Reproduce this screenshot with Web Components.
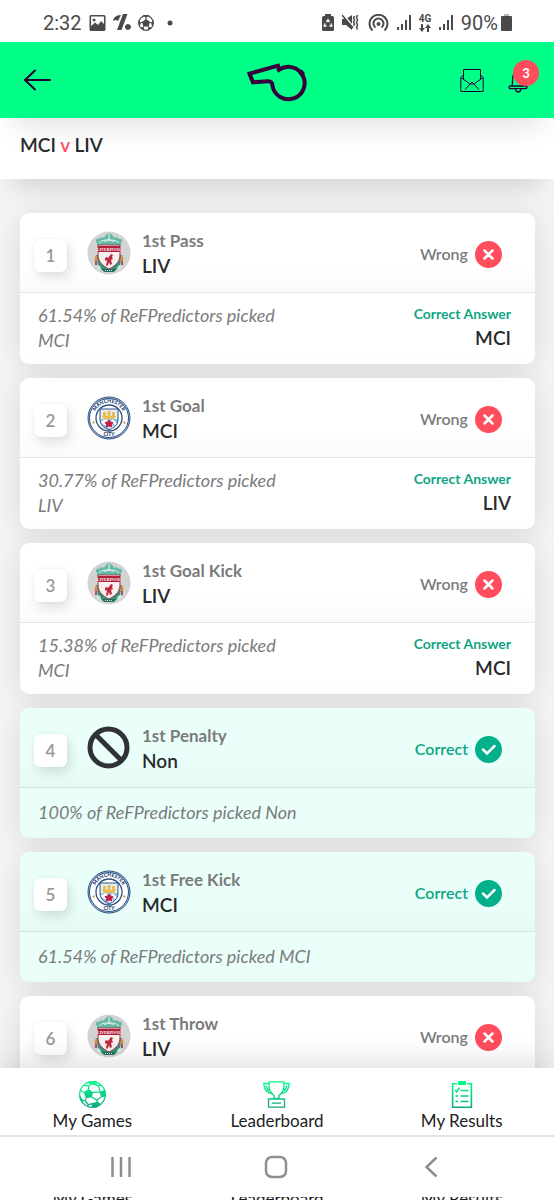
<!DOCTYPE html>
<html lang="en">
<head>
<meta charset="utf-8">
<meta name="viewport" content="width=device-width, initial-scale=1">
<title>MCI v LIV</title>
<style>
  html, body { height: 100%; }
  body {
    margin: 0;
    font-family: Lato, "Open Sans", sans-serif;
    color: #2a2b2c;
    background: #f4f4f4;
  }
</style>
</head>
<body>
<app-screen>
  <status-bar slot="top" time="2:32" battery="90%"></status-bar>
  <app-header slot="top" count="3"></app-header>
  <match-bar slot="top" home="MCI" away="LIV"></match-bar>

  <prediction-card number="1" event="1st Pass" pick="LIV" result="wrong" answer="MCI">61.54% of ReFPredictors picked MCI</prediction-card>
  <prediction-card number="2" event="1st Goal" pick="MCI" result="wrong" answer="LIV">30.77% of ReFPredictors picked LIV</prediction-card>
  <prediction-card number="3" event="1st Goal Kick" pick="LIV" result="wrong" answer="MCI">15.38% of ReFPredictors picked MCI</prediction-card>
  <prediction-card number="4" event="1st Penalty" pick="Non" result="correct">100% of ReFPredictors picked Non</prediction-card>
  <prediction-card number="5" event="1st Free Kick" pick="MCI" result="correct">61.54% of ReFPredictors picked MCI</prediction-card>
  <prediction-card number="6" event="1st Throw" pick="LIV" result="wrong"></prediction-card>

  <tab-bar slot="bottom">
    <tab-item icon="ball" href="#games">My Games</tab-item>
    <tab-item icon="trophy" href="#leaderboard">Leaderboard</tab-item>
    <tab-item icon="list" href="#results">My Results</tab-item>
  </tab-bar>
  <system-nav slot="bottom">
    <span>My Games</span><span>Leaderboard</span><span>My Results</span>
  </system-nav>
</app-screen>

<script>
const gradient = `
  <linearGradient id="g" gradientUnits="userSpaceOnUse" x1="0" y1="0" x2="0" y2="27">
    <stop offset="0" stop-color="#00ff87"/><stop offset="1" stop-color="#0fa583"/>
  </linearGradient>`;

const tabIcons = {
  ball: `<svg width="27" height="27" viewBox="0 0 27 27" fill="none" stroke="url(#g)" stroke-width="1.2">
    <defs>${gradient}</defs>
    <circle cx="13.5" cy="13.5" r="12.8"/>
    <path fill="url(#g)" d="M5.5 11.5 9.5 8.8 13.3 11.3 12.5 15.8 7.3 16.5zM21.3 11.2 25.8 9.3 26.2 15 22.7 15.6zM13.3 22.6 18.5 21.3 20.7 22.8 17.5 26 13.4 26zM9.5 1.6 13.5 2.8 17.8 1.8 17 .9 10.5.9zM.9 15.2 2.8 18.7 3.6 22.3 1.5 18z"/>
    <path d="M9.5 8.8 9.8 4.8 13.5 2.8 19.2 4.6 21.3 11.2 13.3 11.3M19.2 4.6 22.6 4.5M9.8 4.8 5 4.5M5.5 11.5 1.4 9.5M7.3 16.5 6.2 20 2.8 18.7M6.2 20 9.2 23.7 13.3 22.6M9.2 23.7 8.9 25.4M12.5 15.8 17.7 19.2 18.5 21.3M17.7 19.2 22.7 15.6"/>
  </svg>`,
  trophy: `<svg width="27" height="27" viewBox="0 0 27 27" fill="none" stroke="url(#g)" stroke-width="1.3">
    <defs>${gradient}</defs>
    <path d="M6 .8h15v4.5c0 4.7-2.5 7.2-5 9.2v2.8h-5v-2.8c-2.5-2-5-4.5-5-9.2z"/>
    <path d="M6 2.5H.8c0 5.5 3 9 7.5 10M21 2.5h5.2c0 5.5-3 9-7.5 10M3 4.5c.5 2.5 1.5 4.5 3.8 5.5M24 4.5c-.5 2.5-1.5 4.5-3.8 5.5"/>
    <path d="M5.5 18h16v8.2h-16zM9 22.1h9"/>
  </svg>`,
  list: `<svg width="22" height="27" viewBox="0 0 22 27" fill="none" stroke="url(#g)" stroke-width="1.6">
    <defs>${gradient}</defs>
    <path d="M6 2.8H1.6v23.4h18.8V2.8H16"/>
    <path fill="url(#g)" stroke="none" d="M7 1.2C7 .5 7.5 0 8.2 0h5.6c.7 0 1.2.5 1.2 1.2V4H7z"/>
    <path d="M9.5 9.5h8M9.5 15h8M9.5 20.5h8M4.2 9l1.5 1.8 2.8-4M4.5 15h2.6M4.5 20.5h2.6"/>
  </svg>`
};

const crests = {
  LIV: `<svg viewBox="0 0 44 44" width="44" height="44" aria-hidden="true">
    <circle cx="22" cy="22" r="21.5" fill="#d3d3d3"/>
    <path d="M10 12c-2-2-1-5 2-4 1-2 4-2 5-1 1-3 3-4 5-5 2 1 4 2 5 5 1-1 4-1 5 1 3-1 4 2 2 4v3H10z" fill="#63b9a8"/>
    <path d="M12 12c3-3 6-3 10-3s7 0 10 3M16 9c1 2 3 2 6-1 3 3 5 3 6 1M22 3v7" fill="none" stroke="#e8f4ef" stroke-width="1"/>
    <path d="M9 24c1.5 4 1.5 8 2 11l5 5h12l5-5c.5-3 .5-7 2-11z" fill="#2f9380"/>
    <path d="M9 36l3-2 2 3-2 2zM35 36l-3-2-2 3 2 2z" fill="#d7e9e3"/>
    <path d="M11 14h22v9c0 7-3 11-11 15-8-4-11-8-11-15z" fill="#f6efee" stroke="#a93a46" stroke-width="1"/>
    <path d="M11 15h22v6H11z" fill="#b32039"/>
    <text x="22" y="20" text-anchor="middle" font-family="Liberation Serif, serif" font-size="4" font-weight="700" fill="#fff">LIVERPOOL</text>
    <path d="M24 23l2 1-1 2 1 2-2 1 1 4-2 1-1-3-1 3-1 1-1-1 1-4-1-1-1 1v-3l2-1 1 1z" fill="#c0283f"/>
    <path d="M8 30c-1-2 0-4 1-6 1 2 2 4 1 6zM36 30c1-2 0-4-1-6-1 2-2 4-1 6z" fill="#e38b34"/>
    <path d="M9 30v4M35 30v4" stroke="#b32039" stroke-width="1.5"/>
    <path d="M15 38h14l-2 3H17z" fill="#23705f"/><path d="M18 39.5h8" stroke="#cfe5de" stroke-width="1" stroke-dasharray="1 1"/>
  </svg>`,
  MCI: `<svg viewBox="0 0 44 44" width="44" height="44" aria-hidden="true">
    <defs><path id="arc" d="M7.2 24a15 15 0 1 1 29.6 0"/><clipPath id="shield"><path d="M13 13h18v10c0 6-4 9-9 11-5-2-9-5-9-11z"/></clipPath></defs>
    <circle cx="22" cy="22" r="21" fill="#b5c9dc" stroke="#2c5284"/>
    <circle cx="22" cy="22" r="19.5" fill="#fff" stroke="#2c5284" stroke-width="1"/>
    <circle cx="22" cy="22" r="13" fill="#fff" stroke="#2c5284" stroke-width="1.3"/>
    <g font-family="Lato, sans-serif" font-size="5" font-weight="900" fill="#1c3f74" text-anchor="middle">
      <text><textPath href="#arc" startOffset="50%">MANCHESTER</textPath></text>
      <text x="22" y="39.5">CITY</text>
    </g>
    <path d="M5.5 26l1.5-1 1 2-2 1zM38.5 26l-1.5-1-1 2 2 1z" fill="#c9a54a"/>
    <g clip-path="url(#shield)">
      <path d="M13 13h18v21H13z" fill="#8fc3e8"/>
      <path d="M13 13h18v10H13z" fill="#e4eef6"/>
      <path d="M13 26l6-3 10 10h-5zM25 23l7 6v3l-8-6z" fill="#fff"/>
      <path d="M15 20h14l-2 3H17zM16 16h3v4h-3zM20.5 15h3v5h-3zM25 16h3v4h-3z" fill="#ecbd4d"/>
    </g>
    <path d="M13 13h18v10c0 6-4 9-9 11-5-2-9-5-9-11z" fill="none" stroke="#2c5284"/>
    <path d="M22 24l1.5 2 2.5.5-1.5 2 .3 2.5-2.800-1-2.800 1 .3-2.500-1.500-2 2.500-.5z" fill="#c4204d" stroke="#c4204d"/>
  </svg>`,
  Non: `<svg viewBox="0 0 44 44" width="44" height="44" fill="none" stroke="#313235" stroke-width="5" aria-hidden="true">
    <circle cx="21.5" cy="21.5" r="18.5"/><path d="M8.5 8.5l26 26"/>
  </svg>`
};

class AppScreen extends HTMLElement {
  constructor() {
    super();
    this.attachShadow({ mode: "open" }).innerHTML = `
      <style>
        :host { display: flex; flex-direction: column; height: 100vh; }
        header { position: relative; z-index: 2; }
        main {
          flex: 1;
          min-height: 0;
          overflow-y: auto;
          scrollbar-width: none;
          display: flex;
          flex-direction: column;
          gap: 14px;
          padding: 34px 19px 20px 20px;
        }
        footer { position: relative; z-index: 2; }
      </style>
      <header><slot name="top"></slot></header>
      <main><slot></slot></main>
      <footer><slot name="bottom"></slot></footer>
    `;
  }
}

class StatusBar extends HTMLElement {
  connectedCallback() {
    const signal = `<svg width="14" height="16" viewBox="0 0 14 16"><path d="M0 12h2v3H0zM4 9h2v6H4zM8 5h2v10H8zM12 0h2v15h-2z"/></svg>`;
    this.attachShadow({ mode: "open" }).innerHTML = `
      <style>
        :host {
          display: flex;
          justify-content: space-between;
          align-items: center;
          height: 42px;
          padding: 3px 42px 0 43px;
          box-sizing: border-box;
          background: #fff;
          color: #4a4a4a;
          font: 20px/24px Roboto, sans-serif;
        }
        div { display: flex; align-items: center; gap: 8px; }
        .left { gap: 7px; }
        .battery { gap: 3px; }
        svg { display: block; fill: currentColor; }
        .net { font: 700 10px/10px Roboto, sans-serif; text-align: center; width: 12px; }
        .net svg { margin: 0 auto; }
      </style>
      <div class="left">
        <span>${this.getAttribute("time")}</span>
        <svg width="17" height="16" viewBox="0 0 16 16"><path fill-rule="evenodd" d="M1.5 0h13Q16 0 16 1.5v13q0 1.5-1.5 1.5h-13Q0 16 0 14.5v-13Q0 0 1.5 0zM1.6 1.6V11l4-3.5 3 2.5 3-4 2.800 3V1.6zM4.5 3.5a1.5 1.5 0 1 0 .1 0z"/></svg>
        <svg width="18" height="17" viewBox="0 0 18 17"><path d="M0 6Q2 1 8 1L5 7Q2 5 1 7zM10 0h4.500L8.500 16H4zM15 10a3 3 0 1 1-.1 0z"/></svg>
        <svg width="16" height="16" viewBox="0 0 16 16"><circle cx="8" cy="8" r="7.3" fill="none" stroke="currentColor" stroke-width="1.2"/><path d="M8 4l4 3-1.5 4.5h-5L4 7zM4.5 0h7L8 2.8zM0 5l3 3-1.5 4zM16 5l-3 3 1.5 4zM2 12.5l3.5-.5 1 4zM14 12.5l-3.5-.5-1 4z"/><path d="M8 2v3M2 8l3-1M14 8l-3-1M5 13l1-2M11 13l-1-2" stroke="currentColor"/></svg>
        <svg width="17" height="6" viewBox="0 0 17 6"><circle cx="9" cy="3" r="2.5"/></svg>
      </div>
      <div>
        <svg width="12" height="17" viewBox="0 0 12 17"><path d="M3 2V0h6v2h1.5Q12 2 12 3.5v12q0 1.5-1.5 1.5h-9Q0 17 0 15.5v-12Q0 2 1.5 2z"/><path d="M4.5 8L6 5.8 7.5 8M9 9.5l.8 2.5H7.5M4.5 12H2.2L3 9.5" fill="none" stroke="#fff" stroke-width="1.4"/></svg>
        <svg width="18" height="17" viewBox="0 0 18 17"><path d="M0 5h4l6-4v15l-6-5H0z"/><path d="M1 0l11 14" stroke="#fff" stroke-width="2"/><path d="M0 1l11 13M12.5 2l-1 2 1 2-1 2 1 2-1 2M15.5 1l-1 2.5 1 2.5-1 2.5 1 2.5-1 2.5 1 2" fill="none" stroke="currentColor" stroke-width="1.5"/></svg>
        <svg width="21" height="18" viewBox="0 0 21 18"><g fill="none" stroke="currentColor" stroke-width="2"><path d="M4.5 16.5a9 9 0 1 1 12 0"/><path d="M7.5 13.5a5 5 0 1 1 6 0"/></g><circle cx="10.5" cy="10" r="2"/></svg>
        ${signal}
        <span class="net">4G<svg width="12" height="8" viewBox="0 0 12 8"><path d="M2 0h2v4h2L3 8 0 4h2zM8 8h2V4h2L9 0 6 4h2z"/></svg></span>
        ${signal}
        <div class="battery">
          <span>${this.getAttribute("battery")}</span>
          <svg width="11" height="17" viewBox="0 0 11 17"><path d="M3 0h5v2H3z" opacity=".4"/><path d="M1 2h9q1 0 1 1v13q0 1-1 1H1q-1 0-1-1V3q0-1 1-1z"/></svg>
        </div>
      </div>
    `;
  }
}

class AppHeader extends HTMLElement {
  connectedCallback() {
    this.attachShadow({ mode: "open" }).innerHTML = `
      <style>
        :host {
          display: grid;
          grid-template-columns: 1fr auto 1fr;
          align-items: center;
          height: 76px;
          padding: 0 24px;
          box-sizing: border-box;
          background: #00ff87;
          position: relative;
          z-index: 1;
          box-shadow: 0 22px 30px -14px rgba(0, 0, 0, .12);
        }
        button {
          display: block;
          padding: 0;
          border: 0;
          background: none;
          color: #250034;
          cursor: pointer;
          position: relative;
        }
        svg { display: block; fill: none; stroke: currentColor; }
        .back { justify-self: start; }
        .actions { justify-self: end; display: flex; gap: 24px; }
        .logo { color: #37003c; }
        .badge {
          position: absolute;
          left: 5px;
          top: -7px;
          width: 26px;
          border-radius: 50%;
          background: #ff4d5e;
          color: #fff;
          font: 700 13px/26px Lato, sans-serif;
          text-align: center;
        }
      </style>
      <button class="back" aria-label="Back">
        <svg width="28" height="24" viewBox="1 0 28 24" stroke-width="2" stroke-linecap="round" stroke-linejoin="round"><path d="M27 12H2M12 2.5L2 12l10 9.5"/></svg>
      </button>
      <svg class="logo" width="62" height="46" viewBox="-1 -6 62 46" stroke-width="4" role="img" aria-label="ReFPredictor">
        <path d="M2.5 10.7L31 2.6l1.2 4.1A16.2 16.2 0 1 1 25.5 23Q25.5 18 20.5 18.3L6 19.3z"/>
        <path d="M31 5l2 2M53 8l3 4" stroke-width="5"/>
      </svg>
      <div class="actions">
        <button aria-label="Messages">
          <svg width="24" height="26" viewBox="0 0 24 26" stroke-width="1"><path d="M3.5 12V2.5h17V12M3.5 8L.8 10.5v14h22.4v-14L20.5 8M.8 10.5l8.7 6M23.2 10.5l-8.7 6M5 22.5l7-7.5 7 7.5M9.5 16.5q2.5 1.5 5 0"/></svg>
        </button>
        <button aria-label="Notifications">
          <svg width="22" height="26" viewBox="0 0 22 26" stroke-width="1.3"><path d="M4 19C5 16 4 10 5.5 7.5 8 4 13 4 15.5 7.5 17 10 16 16 17 19M2.5 19h15q1.5 0 1.5 1.3t-1.5 1.4h-15Q1 21.7 1 20.3T2.5 19zM7.5 22q.3 3 2.7 3t2.8-3"/></svg>
          <span class="badge">${this.getAttribute("count")}</span>
        </button>
      </div>
    `;
  }
}

class MatchBar extends HTMLElement {
  connectedCallback() {
    this.attachShadow({ mode: "open" }).innerHTML = `
      <style>
        :host {
          display: block;
          padding: 15px 20px 22px;
          background: #fff;
          box-shadow: 0 20px 28px -14px rgba(0, 0, 0, .16);
        }
        h1 { margin: 0; font-size: 19px; line-height: 24px; font-weight: 600; }
        span { color: #ff4d5e; }
      </style>
      <h1>${this.getAttribute("home")} <span>v</span> ${this.getAttribute("away")}</h1>
    `;
  }
}

class ResultMark extends HTMLElement {
  connectedCallback() {
    const ok = this.getAttribute("result") === "correct";
    this.attachShadow({ mode: "open" }).innerHTML = `
      <style>
        :host {
          display: flex;
          align-items: center;
          gap: 7px;
          font-size: 16px;
          line-height: 24px;
          font-weight: 600;
          color: ${ok ? "#0fa583" : "#7b7b7b"};
        }
        svg { display: block; fill: none; stroke: #fff; stroke-linecap: round; }
      </style>
      <span>${ok ? "Correct" : "Wrong"}</span>
      <svg width="27" height="27" viewBox="0 0 27 27" stroke-width="2.5" aria-hidden="true">
        <circle cx="13.5" cy="13.5" r="13.5" stroke="none" fill="${ok ? "#04b08b" : "#ff4d5e"}"/>
        <path d="${ok ? "M8 13.5l4 4 7.5-7.5" : "M9.5 9.5l8 8M17.5 9.5l-8 8"}"/>
      </svg>
    `;
  }
}

class PredictionCard extends HTMLElement {
  connectedCallback() {
    const pick = this.getAttribute("pick");
    const result = this.getAttribute("result");
    const answer = this.getAttribute("answer");
    this.attachShadow({ mode: "open" }).innerHTML = `
      <style>
        :host {
          display: block;
          flex: none;
          border-radius: 9px;
          background: #fff;
          box-shadow: 0 4px 30px rgba(0, 0, 0, .11);
        }
        :host([result="correct"]) { background: #eafffa; }
        .head {
          display: flex;
          align-items: center;
          height: 79px;
          padding: 0 33px 0 14px;
          border-bottom: 1px solid rgba(0, 0, 0, .1);
          background: linear-gradient(transparent 65%, rgba(0, 0, 0, .02));
        }
        .number {
          width: 33px;
          margin: 6px 20px 0 0;
          border-radius: 6px;
          background: #fff;
          box-shadow: 3px 5px 12px rgba(0, 0, 0, .12), 0 0 2px rgba(0, 0, 0, .08);
          color: #999;
          font-size: 17px;
          line-height: 33px;
          font-weight: 600;
          text-align: center;
        }
        .title { flex: 1; margin-left: 11px; }
        h2, p { margin: 0; }
        h2 { font-size: 17px; line-height: 25px; font-weight: 700; color: #7b7b7b; }
        .pick, .answer strong { font-size: 19px; line-height: 25px; font-weight: 600; }
        result-mark { padding-top: 3px; }
        .body {
          display: flex;
          justify-content: space-between;
          align-items: center;
          min-height: 50px;
          padding: 10px 24px 11px 18px;
          box-sizing: border-box;
        }
        .stat {
          font-size: 18px;
          line-height: 25px;
          font-style: italic;
          color: #7b7b7b;
        }
        :host([answer]) .stat { width: 52%; }
        .answer { align-self: flex-start; text-align: right; }
        .answer span { display: block; font-size: 14px; line-height: 22px; font-weight: 700; color: #0fa583; }
        .answer strong { display: block; }
      </style>
      <div class="head">
        <div class="number">${this.getAttribute("number")}</div>
        ${crests[pick]}
        <div class="title">
          <h2>${this.getAttribute("event")}</h2>
          <p class="pick">${pick}</p>
        </div>
        <result-mark result="${result}"></result-mark>
      </div>
      <div class="body">
        <p class="stat"><slot></slot></p>
        ${answer ? `<p class="answer"><span>Correct Answer</span><strong>${answer}</strong></p>` : ""}
      </div>
    `;
  }
}

class TabBar extends HTMLElement {
  constructor() {
    super();
    this.attachShadow({ mode: "open" }).innerHTML = `
      <style>
        :host { display: block; background: #fff; box-shadow: 0 -8px 30px rgba(0, 0, 0, .1); }
        nav { display: grid; grid-template-columns: repeat(3, 1fr); border-bottom: 2px solid #e3e3e3; }
      </style>
      <nav><slot></slot></nav>
    `;
  }
}

class TabItem extends HTMLElement {
  connectedCallback() {
    this.attachShadow({ mode: "open" }).innerHTML = `
      <style>
        :host { display: block; }
        a {
          display: flex;
          flex-direction: column;
          align-items: center;
          gap: 1px;
          padding: 13px 0 2px;
          font-size: 17px;
          line-height: 24px;
          color: #1d1d1d;
          text-decoration: none;
        }
        svg { display: block; }
      </style>
      <a href="${this.getAttribute("href")}">${tabIcons[this.getAttribute("icon")]}<span><slot></slot></span></a>
    `;
  }
}

class SystemNav extends HTMLElement {
  constructor() {
    super();
    this.attachShadow({ mode: "open" }).innerHTML = `
      <style>
        :host { display: block; background: #fff; }
        .keys {
          display: grid;
          grid-template-columns: repeat(3, 1fr);
          justify-items: center;
          align-items: center;
          height: 60px;
          padding: 0 45px 0 43px;
        }
        button { display: block; padding: 0; border: 0; background: none; }
        svg { display: block; fill: none; stroke: #8e8e8e; stroke-width: 2.5; }
        /* sliver of the labels that shows under the keys */
        .under {
          display: grid;
          grid-template-columns: repeat(3, 1fr);
          align-items: center;
          height: 3px;
          overflow: hidden;
          font-size: 17px;
          line-height: 3px;
          text-align: center;
          color: #1d1d1d;
        }
      </style>
      <div class="keys">
        <button aria-label="Recent apps"><svg width="22" height="22" viewBox="0 0 22 22"><path d="M2.5 1v20M11 1v20M19.5 1v20"/></svg></button>
        <button aria-label="Home"><svg width="24" height="24" viewBox="0 0 24 24"><rect x="2" y="2" width="20" height="20" rx="6"/></svg></button>
        <button aria-label="Back"><svg width="14" height="22" viewBox="0 0 14 22"><path d="M12.5 1.5L2.5 11l10 9.5"/></svg></button>
      </div>
      <div class="under" aria-hidden="true"><slot></slot></div>
    `;
  }
}

customElements.define("app-screen", AppScreen);
customElements.define("status-bar", StatusBar);
customElements.define("app-header", AppHeader);
customElements.define("match-bar", MatchBar);
customElements.define("result-mark", ResultMark);
customElements.define("prediction-card", PredictionCard);
customElements.define("tab-bar", TabBar);
customElements.define("tab-item", TabItem);
customElements.define("system-nav", SystemNav);
</script>
</body>
</html>
